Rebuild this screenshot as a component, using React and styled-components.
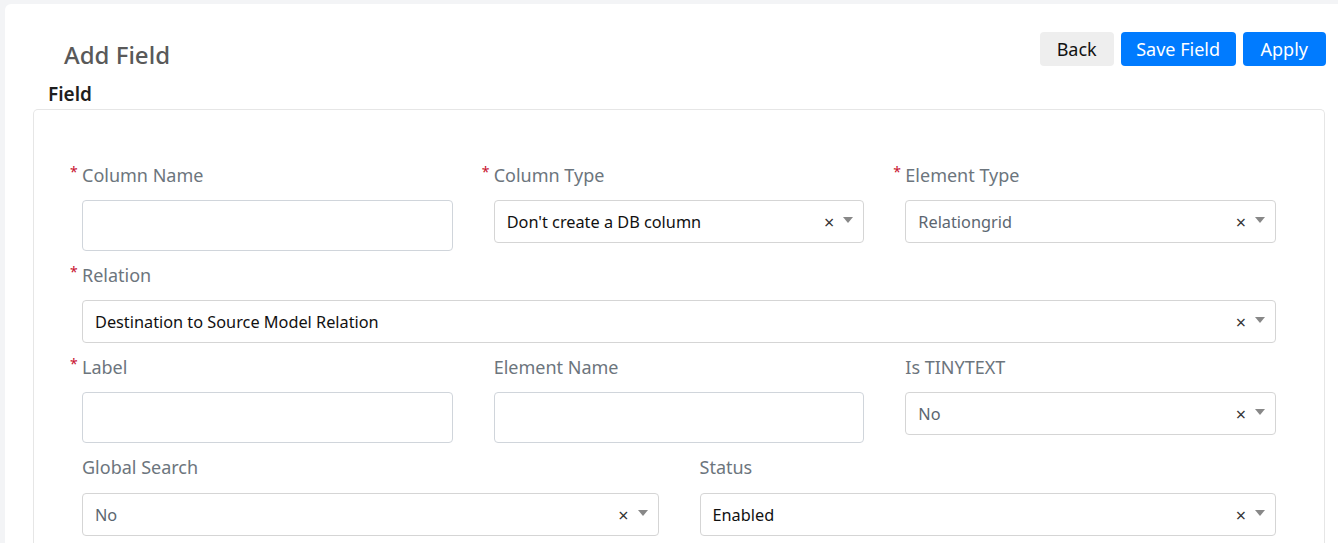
import React from 'react';
import styled, { createGlobalStyle } from 'styled-components';

const GlobalStyle = createGlobalStyle`
  html, body {
    margin: 0;
    padding: 0;
    background: #f3f4f6;
    font-family: "Noto Sans", "Open Sans", Arial, sans-serif;
  }
  * { box-sizing: border-box; }
`;

const Page = styled.div`
  padding: 4px 0 0 5px;
  min-height: 543px;
  overflow: hidden;
`;

const Panel = styled.div`
  background: #fff;
  border-radius: 6px 0 0 0;
  min-height: 600px;
  padding: 28px 12px 0 28px;
`;

const Header = styled.div`
  display: flex;
  justify-content: space-between;
  align-items: flex-start;
`;

const Title = styled.h2`
  margin: 7px 0 0 31px;
  font-size: 24px;
  line-height: 32px;
  font-weight: 500;
  color: #595959;
`;

const Actions = styled.div`
  display: flex;
  gap: 7px;
`;

const Button = styled.button`
  height: 34px;
  padding: 0 ${p => p.$px || 14}px;
  border: none;
  border-radius: 4px;
  font-family: inherit;
  font-size: 18px;
  background: ${p => (p.$primary ? '#007bff' : '#eeeeee')};
  color: ${p => (p.$primary ? '#fff' : '#111')};
  cursor: pointer;
`;

const SectionTitle = styled.div`
  margin: 11px 0 3px 15px;
  font-size: 19px;
  line-height: 24px;
  font-weight: 600;
  color: #1e1e1e;
`;

const Card = styled.div`
  border: 1px solid #e6e6e6;
  border-bottom: none;
  border-radius: 5px 5px 0 0;
  margin-right: 1px;
  padding: 53px 48px 0 48px;
`;

const Row = styled.div`
  display: grid;
  grid-template-columns: repeat(${p => p.$cols || 3}, 1fr);
  column-gap: 41px;
`;

const Field = styled.div`
  display: flex;
  flex-direction: column;
  margin-bottom: 12px;
  grid-column: span ${p => p.$span || 1};
`;

const Label = styled.label`
  font-size: 18px;
  line-height: 24px;
  color: #6c757d;
  margin-bottom: ${p => p.$gap || 13}px;
`;

const Required = styled.span`
  display: inline-block;
  width: 12px;
  margin-left: -12px;
  color: #c8102e;
  font-size: 14px;
  vertical-align: top;
  line-height: 18px;
`;

const TextInput = styled.input`
  height: 51px;
  border: 1px solid #d0d5db;
  border-radius: 4px;
  outline: none;
  font-family: inherit;
  font-size: 16px;
  padding: 0 12px;
`;

const SelectBox = styled.div`
  height: 43px;
  border: 1px solid #d5d5d5;
  border-radius: 4px;
  display: flex;
  align-items: center;
  padding: 0 10px 0 12px;
`;

const SelectValue = styled.span`
  flex: 1;
  font-size: 16.3px;
  color: ${p => (p.$muted ? '#5c6670' : '#111')};
  white-space: nowrap;
`;

const Clear = styled.span`
  font-size: 18px;
  color: #333;
  margin-right: 9px;
  line-height: 1;
`;

const Caret = styled.span`
  width: 0;
  height: 0;
  border-left: 5px solid transparent;
  border-right: 5px solid transparent;
  border-top: 6px solid #888;
  margin-top: -4px;
`;

function Select({ value, muted }) {
  return (
    <SelectBox>
      <SelectValue $muted={muted}>{value}</SelectValue>
      <Clear>×</Clear>
      <Caret />
    </SelectBox>
  );
}

function FieldLabel({ children, required, gap }) {
  return (
    <Label $gap={gap}>
      {required && <Required>*</Required>}
      {children}
    </Label>
  );
}

export default function App() {
  return (
    <>
      <GlobalStyle />
      <Page>
        <Panel>
          <Header>
            <Title>Add Field</Title>
            <Actions>
              <Button $px={17}>Back</Button>
              <Button $primary $px={15.5}>Save Field</Button>
              <Button $primary $px={18}>Apply</Button>
            </Actions>
          </Header>
          <SectionTitle>Field</SectionTitle>
          <Card>
            <Row $cols={3}>
              <Field>
                <FieldLabel required>Column Name</FieldLabel>
                <TextInput />
              </Field>
              <Field>
                <FieldLabel required>Column Type</FieldLabel>
                <Select value="Don't create a DB column" />
              </Field>
              <Field>
                <FieldLabel required>Element Type</FieldLabel>
                <Select value="Relationgrid" muted />
              </Field>
              <Field $span={3}>
                <FieldLabel required>Relation</FieldLabel>
                <Select value="Destination to Source Model Relation" />
              </Field>
              <Field>
                <FieldLabel required>Label</FieldLabel>
                <TextInput />
              </Field>
              <Field>
                <FieldLabel>Element Name</FieldLabel>
                <TextInput />
              </Field>
              <Field>
                <FieldLabel>Is TINYTEXT</FieldLabel>
                <Select value="No" muted />
              </Field>
            </Row>
            <Row $cols={2}>
              <Field>
                <FieldLabel gap={14}>Global Search</FieldLabel>
                <Select value="No" muted />
              </Field>
              <Field>
                <FieldLabel gap={14}>Status</FieldLabel>
                <Select value="Enabled" />
              </Field>
            </Row>
          </Card>
        </Panel>
      </Page>
    </>
  );
}
